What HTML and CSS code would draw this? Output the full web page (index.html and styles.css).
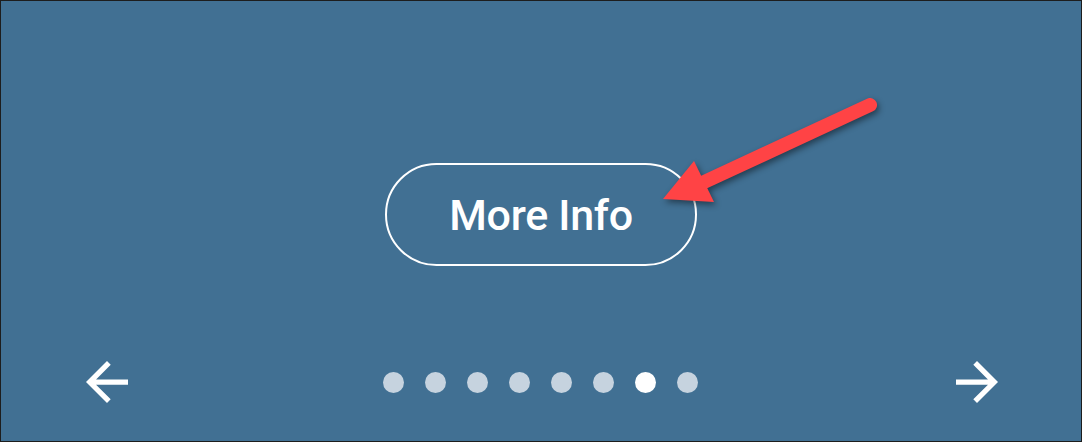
FILE: index.html
```html
<!DOCTYPE html>
<html>
<head>
<meta charset="utf-8">
<link rel="stylesheet" href="styles.css">
</head>
<body>
<div class="frame">
  <div class="hero">
    <button class="more-btn">More Info</button>
  </div>
  <div class="nav">
    <svg class="nav-arrow prev" viewBox="4 4 16 16" width="42" height="42"><path d="M20 11H7.83l5.59-5.59L12 4l-8 8 8 8 1.41-1.41L7.83 13H20v-2z" fill="#fff"/></svg>
    <div class="dots">
      <span class="dot"></span><span class="dot"></span><span class="dot"></span><span class="dot"></span><span class="dot"></span><span class="dot"></span><span class="dot active"></span><span class="dot"></span>
    </div>
    <svg class="nav-arrow next" viewBox="4 4 16 16" width="42" height="42"><path d="M12 4l-1.41 1.41L16.17 11H4v2h12.17l-5.58 5.59L12 20l8-8z" fill="#fff"/></svg>
  </div>
  <svg class="callout" viewBox="0 0 1082 442" width="1082" height="442">
    <g class="callout-shape">
      <line x1="870" y1="105" x2="702" y2="183" stroke="#ff4345" stroke-width="14" stroke-linecap="round"/>
      <polygon points="663,199 694,161 714,202" fill="#ff4345"/>
    </g>
  </svg>
</div>
</body>
</html>
```

FILE: styles.css
```css
html, body {
  margin: 0;
  padding: 0;
}
body {
  font-family: Roboto, "Liberation Sans", sans-serif;
  background: #417093;
}
.frame {
  position: relative;
  box-sizing: border-box;
  width: 1082px;
  height: 442px;
  border: 1px solid #1d1d1d;
  background: #417093;
  padding-top: 162px;
  overflow: hidden;
}
.hero {
  display: flex;
  justify-content: center;
}
.more-btn {
  box-sizing: border-box;
  width: 312px;
  height: 103px;
  border: 2px solid #fff;
  border-radius: 52px;
  background: transparent;
  color: #fff;
  font-family: Roboto, "Liberation Sans", sans-serif;
  font-weight: 500;
  font-size: 43px;
  padding: 0;
  letter-spacing: -0.3px;
}
.nav {
  margin-top: 95px;
  display: grid;
  grid-template-columns: 1fr auto 1fr;
  align-items: center;
  height: 42px;
  padding: 0 83px 0 85px;
}
.prev { justify-self: start; }
.next { justify-self: end; }
.dots {
  display: flex;
  gap: 21px;
  margin-left: -3px;
}
.dot {
  width: 21px;
  height: 21px;
  border-radius: 50%;
  background: #c6d3df;
}
.dot.active {
  background: #fff;
}
.callout {
  position: absolute;
  left: -1px;
  top: -1px;
  pointer-events: none;
}
.callout-shape {
  filter: drop-shadow(2px 3px 3px rgba(0, 0, 0, 0.45));
}
```
